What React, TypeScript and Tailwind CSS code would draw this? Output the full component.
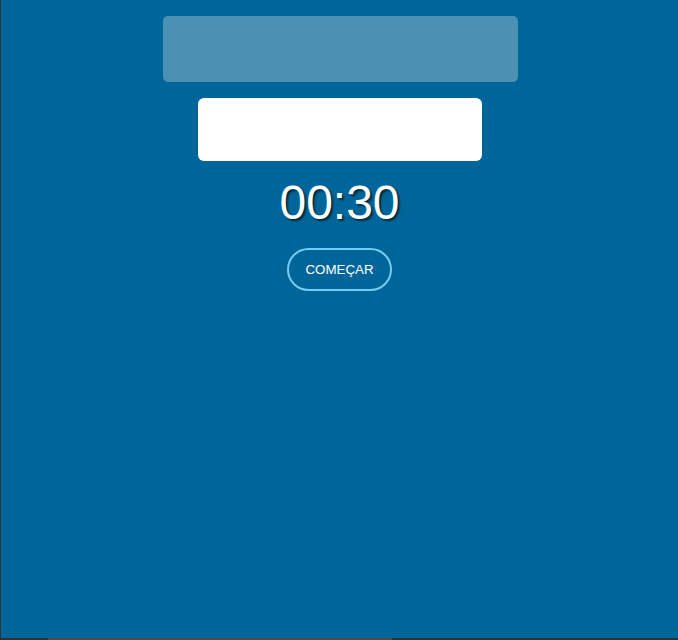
import React from "react";

export default function App() {
  return (
    <div className="w-[678px] h-[640px] flex flex-col bg-[#2d3134] overflow-hidden" style={{ fontFamily: '"Liberation Sans", Arial, sans-serif' }}>
      <div className="flex-1 flex border-l border-[#333333]">
        <div className="flex-1 bg-[#006699] flex flex-col items-center">
          <div className="mt-4 ml-[2px] w-[355px] h-[66px] rounded-[5px] bg-[#4a91b4]" />
          <div className="mt-4 w-[284px] h-[63px] rounded-[6px] bg-white" />
          <div className="mt-[14px] text-[48px] leading-[56px] text-white [text-shadow:2px_2px_2px_rgba(0,0,0,0.6)]">
            00:30
          </div>
          <button className="mt-[17px] h-[43px] px-4 rounded-full border-2 border-[#74cdf0] text-white text-[13.333px] leading-[15px] bg-transparent">
            COMEÇAR
          </button>
        </div>
      </div>
      <div className="h-[2px] flex">
        <div className="w-[48px]" />
        <div className="w-[344px] bg-[#4d4b45]" />
      </div>
    </div>
  );
}
